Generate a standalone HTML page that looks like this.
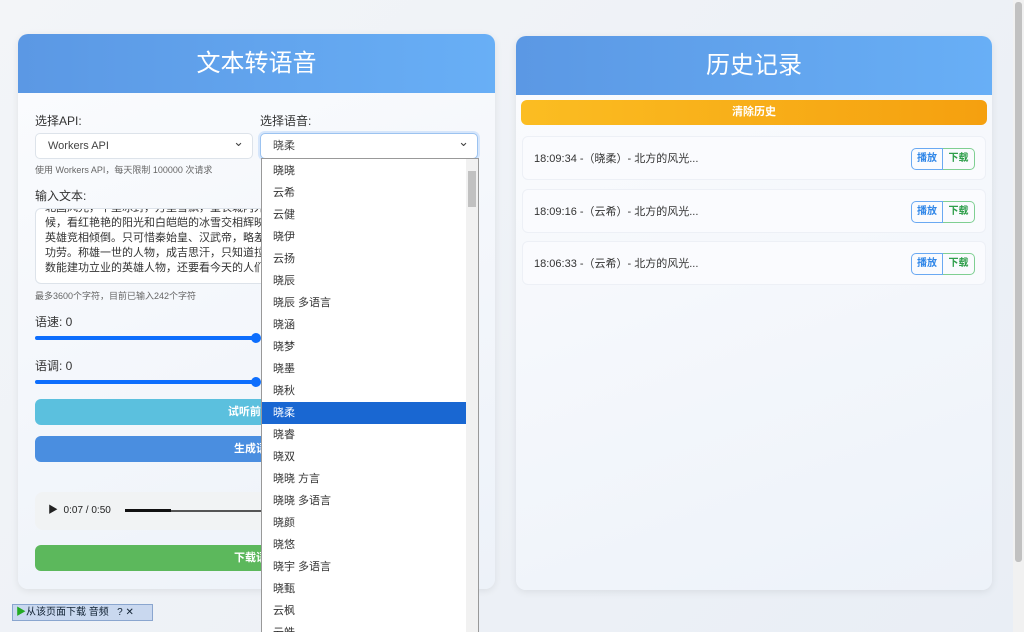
<!DOCTYPE html>
<html><head><meta charset="utf-8"><style>
*{box-sizing:border-box;margin:0;padding:0}
html,body{width:1024px;height:632px;overflow:hidden}
body{background:linear-gradient(135deg,#f3f5f8,#e9eef5);font-family:"Liberation Sans","Noto Sans CJK SC",sans-serif;position:relative;color:#333}
.card{position:absolute;background:linear-gradient(160deg,#fbfcfe,#edf2f9);border-radius:10px;box-shadow:0 2px 8px rgba(0,0,0,.08);overflow:hidden}
.hd{height:59px;background:linear-gradient(90deg,#5b98e4,#68aff6);color:#fff;font-size:24px;text-align:center;line-height:59px}
.lbl{position:absolute;font-size:12px;color:#333}
.sel{position:absolute;height:26px;border:1px solid #dde3ea;border-radius:5px;background:#fff;font-size:11px;line-height:24px;padding-left:12px;color:#444}
.sel:after{content:"⌄";position:absolute;right:8px;top:-4px;font-size:13px}
.small{position:absolute;font-size:9px;color:#666}
.btn{position:absolute;left:17px;width:442px;height:26px;border-radius:6px;color:#fff;font-size:11px;font-weight:bold;text-align:center;line-height:26px}
.range{position:absolute;left:17px;width:222px;height:4px;background:#0d6efd;border-radius:2px}
.range:after{content:"";position:absolute;right:-4px;top:-3px;width:10px;height:10px;border-radius:50%;background:#0d6efd}
.item{position:absolute;left:6px;right:6px;height:44px;background:#fafbfe;border:1px solid #edf0f6;border-radius:6px;font-size:11px;line-height:44px;padding-left:11px;color:#333}
.bb{position:absolute;right:10px;top:11px;height:22px;width:64px;font-size:10px;font-weight:bold;line-height:20px}
.bb span{float:left;width:32px;height:22px;text-align:center}
.dd{position:absolute;left:261px;top:158px;width:218px;height:480px;background:#fff;border:1px solid #999;font-size:11px;color:#333}
.dd div{height:22px;line-height:22px;padding-left:11px;width:205px}
</style></head><body>
<div class="card" style="left:18px;top:34px;width:477px;height:555px">
<div class="hd">文本转语音</div>
<div class="lbl" style="left:17px;top:78px">选择API:</div>
<div class="lbl" style="left:242px;top:78px">选择语音:</div>
<div class="sel" style="left:17px;top:99px;width:218px">Workers API</div>
<div class="sel" style="left:242px;top:99px;width:218px;border-color:#9cc3f0;box-shadow:0 0 0 2px #d6e6fb">晓柔</div>
<div class="small" style="left:17px;top:129px">使用 Workers API，每天限制 100000 次请求</div>
<div class="lbl" style="left:17px;top:153px">输入文本:</div>
<div style="position:absolute;left:17px;top:174px;width:442px;height:76px;background:#fff;border:1px solid #dde3ea;border-radius:6px;font-size:11px;line-height:15px;padding:0 9px;overflow:hidden;color:#333"><div style="margin-top:-8px">北国风光，千里冰封，万里雪飘，望长城内外</div>候，看红艳艳的阳光和白皑皑的冰雪交相辉映<br>英雄竞相倾倒。只可惜秦始皇、汉武帝，略差<br>功劳。称雄一世的人物，成吉思汗，只知道拉<br>数能建功立业的英雄人物，还要看今天的人们</div>
<div class="small" style="left:17px;top:255px">最多3600个字符，目前已输入242个字符</div>
<div class="lbl" style="left:17px;top:279px">语速: 0</div>
<div class="range" style="top:302px"></div>
<div class="lbl" style="left:17px;top:323px">语调: 0</div>
<div class="range" style="top:346px"></div>
<div class="btn" style="top:365px;background:#5bc0de">试听前20字</div>
<div class="btn" style="top:402px;background:#4a8ee0">生成语音</div>
<div style="position:absolute;left:17px;top:458px;width:442px;height:38px;background:#f1f3f4;border-radius:8px;font-size:10px;line-height:38px;padding-left:13px;color:#222">▶&nbsp;&nbsp;0:07 / 0:50<span style="position:absolute;left:90px;top:18px;width:150px;height:2px;background:#555"></span><span style="position:absolute;left:90px;top:17px;width:46px;height:3px;background:#111"></span></div>
<div class="btn" style="top:511px;background:#5cb85c">下载语音</div>
</div>
<div class="card" style="left:516px;top:36px;width:476px;height:554px">
<div class="hd">历史记录</div>
<div style="position:absolute;left:5px;top:64px;width:466px;height:25px;border-radius:6px;background:linear-gradient(90deg,#fbbd22,#f5a00f);color:#fff;font-size:11px;font-weight:bold;text-align:center;line-height:25px">清除历史</div>
<div class="item" style="top:100px">18:09:34 -（晓柔）- 北方的风光...<div class="bb"><span style="border:1px solid #6aa9f2;border-radius:5px 0 0 5px;color:#2f86e8">播放</span><span style="border:1px solid #7fcf92;border-radius:0 5px 5px 0;color:#2e9e4a;border-left:none">下载</span></div></div>
<div class="item" style="top:153px">18:09:16 -（云希）- 北方的风光...<div class="bb"><span style="border:1px solid #6aa9f2;border-radius:5px 0 0 5px;color:#2f86e8">播放</span><span style="border:1px solid #7fcf92;border-radius:0 5px 5px 0;color:#2e9e4a;border-left:none">下载</span></div></div>
<div class="item" style="top:205px">18:06:33 -（云希）- 北方的风光...<div class="bb"><span style="border:1px solid #6aa9f2;border-radius:5px 0 0 5px;color:#2f86e8">播放</span><span style="border:1px solid #7fcf92;border-radius:0 5px 5px 0;color:#2e9e4a;border-left:none">下载</span></div></div>
</div>
<div class="dd">
<div style="margin-top:1px">晓晓</div><div>云希</div><div>云健</div><div>晓伊</div><div>云扬</div><div>晓辰</div><div>晓辰 多语言</div><div>晓涵</div><div>晓梦</div><div>晓墨</div><div>晓秋</div><div style="background:#1967d2;color:#fff">晓柔</div><div>晓睿</div><div>晓双</div><div>晓晓 方言</div><div>晓晓 多语言</div><div>晓颜</div><div>晓悠</div><div>晓宇 多语言</div><div>晓甄</div><div>云枫</div><div>云皓</div>
<span style="position:absolute;right:0;top:0;width:12px;height:100%;background:#f1f1f1"></span>
<span style="position:absolute;right:2px;top:12px;width:8px;height:36px;background:#c1c1c1"></span>
</div>
<div style="position:absolute;right:0;top:0;width:11px;height:632px;background:#f1f1f1"><div style="margin:2px 2px;width:7px;height:560px;background:#c1c1c1;border-radius:3px"></div></div>
<div style="position:absolute;left:12px;top:604px;width:141px;height:17px;background:#c9d8ef;border:1px solid #8aa6cf;font-size:10px;line-height:15px;padding-left:3px;color:#123"><span style="color:#2a2">▶</span>从该页面下载 音频 &nbsp;&nbsp;? ✕</div>
</body></html>
